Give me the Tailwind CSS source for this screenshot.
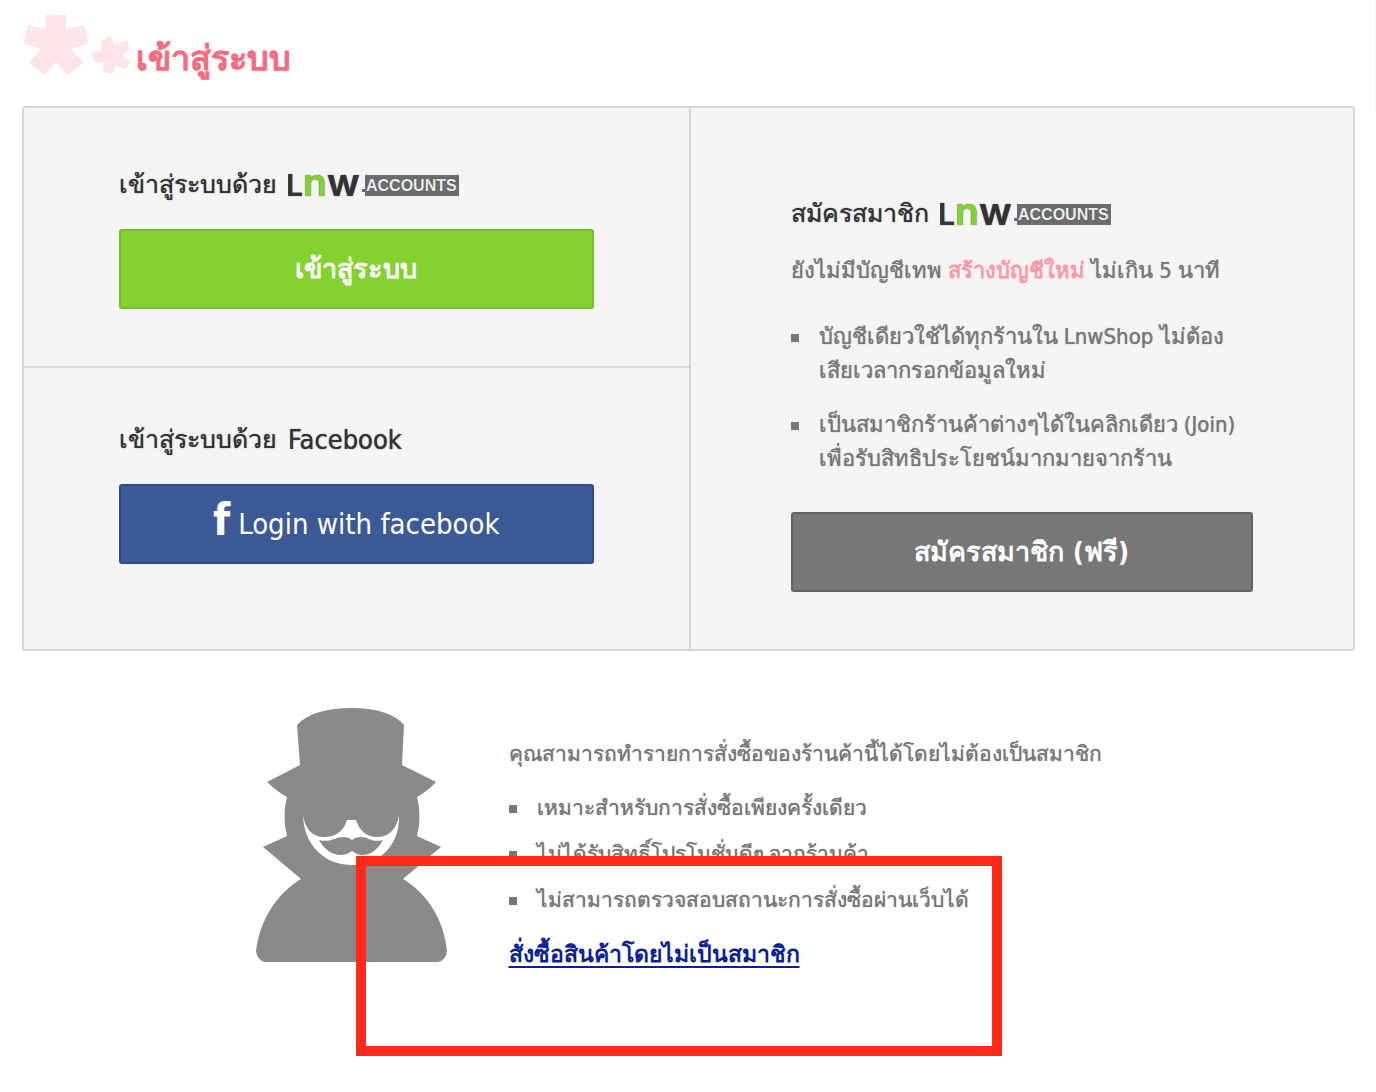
<!DOCTYPE html>
<html lang="th">
  <head>
    <meta charset="UTF-8" />
    <meta name="viewport" content="width=device-width, initial-scale=1.0" />
    <title>เข้าสู่ระบบ</title>
    <script src="https://cdn.jsdelivr.net/npm/@tailwindcss/browser@4"></script>
  </head>
  <body
    class="bg-white text-[#777] text-[21px] leading-[34px] [text-shadow:0_0_1px_currentColor] font-['DejaVu_Sans_Condensed','DejaVu_Sans',sans-serif]"
  >
    <svg class="hidden">
      <symbol id="lnw" viewBox="0 0 172 24">
        <g font-family="Inter, sans-serif" font-weight="600">
          <text x="-2" y="23" font-size="30" fill="#333">L</text>
          <text x="15" y="23" font-size="39" fill="#84d12f">n</text>
          <text x="39" y="23" font-size="39" fill="#333">w</text>
        </g>
        <path d="M77 2h94v21H77v-4h-3v-3h3z" fill="#6b6d6c" />
        <text x="78" y="18" font-family="Liberation Sans, sans-serif" font-size="16" font-weight="700" fill="#eee">ACCOUNTS</text>
      </symbol>
    </svg>
    <main class="relative min-h-screen pr-[21px] pl-[22px] pt-3 pb-9">
      <header class="flex h-[94px] items-start">
        <svg class="w-[110px] h-[66px] shrink-0" viewBox="0 0 110 66" fill="#ffe4e7">
          <path d="M24 1h20v17l18-5 5 18-18 6 12 14-15 12-12-13-12 13-15-12 12-14-18-6 5-18 18 5z" />
          <path d="M27 2h15" stroke="#fff" stroke-width="2" />
          <path d="M8 16l12 4M4 30l12 3M60 16l-12 4M64 30l-12 3" stroke="#fff" stroke-width="1" stroke-dasharray="3 3" />
          <path d="M78 30l10-6 6 9 11-5 3 9-8 6 8 7-4 7-10-4-4 9-9-2 1-9-10-1-2-10 10-2z" />
        </svg>
        <h1 class="pt-[22px] pl-1 text-[34px] leading-[48px] font-bold text-[#f56b80]">เข้าสู่ระบบ</h1>
      </header>

      <div class="grid grid-cols-2 rounded-[3px] border-2 border-[#d5d6da] bg-[#f4f4f4]">
        <div class="flex flex-col">
          <section class="border-b-2 border-[#d5d6da] px-[95px] pt-[57px] pb-[57px]">
            <h2 class="mb-6 flex h-10 items-center gap-[11px] text-[25px] text-[#333]">
              <span class="whitespace-nowrap">เข้าสู่ระบบด้วย</span>
              <svg class="h-6 w-[172px]" role="img" aria-label="Lnw Accounts"><use href="#lnw" /></svg>
            </h2>
            <button
              class="block h-20 w-full rounded-[3px] border-2 border-[#76bd29] bg-[#84d12f] text-[27px] font-bold text-white"
            >
              เข้าสู่ระบบ
            </button>
          </section>
          <section class="px-[95px] pt-[52px] pb-[85px]">
            <h2 class="mb-6 flex h-10 items-center gap-[11px] text-[25px] text-[#333]">
              เข้าสู่ระบบด้วย <span class="text-[27px]">Facebook</span>
            </h2>
            <button
              class="flex h-20 w-full items-center justify-center gap-2 rounded-[3px] border-2 border-[#2f4b82] bg-[#3b5a96] text-[29px] text-white"
            >
              <span class="pb-2 text-[44px] font-bold">f</span>
              <span>Login with facebook</span>
            </button>
          </section>
        </div>

        <section class="border-l-2 border-[#d5d6da] px-[100px] pt-[86px]">
          <h2 class="flex h-10 items-center gap-[11px] text-[25px] text-[#333]">
            <span class="whitespace-nowrap">สมัครสมาชิก</span>
            <svg class="h-6 w-[172px]" role="img" aria-label="Lnw Accounts"><use href="#lnw" /></svg>
          </h2>
          <p class="mt-5 text-[22px] whitespace-nowrap">
            ยังไม่มีบัญชีเทพ <a href="#" class="font-bold text-[#ff98a5] [text-shadow:none]">สร้างบัญชีใหม่</a> ไม่เกิน 5 นาที
          </p>
          <ul class="mt-8 space-y-5 text-[22px] whitespace-nowrap">
            <li class="flex gap-5">
              <span class="mt-[14px] size-2 bg-[#777]"></span>
              <span>บัญชีเดียวใช้ได้ทุกร้านใน LnwShop ไม่ต้อง<br />เสียเวลากรอกข้อมูลใหม่</span>
            </li>
            <li class="flex gap-5">
              <span class="mt-[14px] size-2 bg-[#777]"></span>
              <span>เป็นสมาชิกร้านค้าต่างๆได้ในคลิกเดียว (Join)<br />เพื่อรับสิทธิประโยชน์มากมายจากร้าน</span>
            </li>
          </ul>
          <button
            class="mt-9 block h-20 w-full rounded-[3px] border-2 border-[#626262] bg-[#777] text-[27px] font-bold text-white"
          >
            สมัครสมาชิก (ฟรี)
          </button>
        </section>
      </div>

      <section class="mt-14 flex items-start justify-center gap-[60px] pr-5">
        <svg class="h-[256px] w-[193px] shrink-0" viewBox="0 0 193 256">
          <path
            fill="#8a8a8a"
            d="M41 18C52 6 72 1 95 1s43 5 53 17l-2 40 34 17q-8 9-19 15 5 19 0 39l24 11-38 32c26 16 41 42 44 72q-1 9-9 11H9q-8-2-9-11c4-30 19-56 45-72L7 140l24-11q-5-20 0-39-11-6-20-15l33-17z"
          />
          <path
            fill="#fff"
            d="M47 108c2 14 9 22 21 22 13 0 20-7 23-17h9c3 10 10 17 21 17 12 0 20-8 22-22 1 30-19 50-47 50s-48-20-49-50z"
          />
          <path
            fill="#8a8a8a"
            d="M63 133c12 3 16-3 24-3 4 0 7 1 9 3 2-2 5-3 9-3 8 0 10 6 22 3-8 15-21 19-31 11-10 8-25 4-33-11z"
          />
        </svg>
        <div class="pt-[30px] whitespace-nowrap">
          <p>คุณสามารถทำรายการสั่งซื้อของร้านค้านี้ได้โดยไม่ต้องเป็นสมาชิก</p>
          <ul class="mt-5 space-y-3">
            <li class="flex gap-5">
              <span class="mt-[14px] size-2 bg-[#777]"></span>
              <span>เหมาะสำหรับการสั่งซื้อเพียงครั้งเดียว</span>
            </li>
            <li class="flex gap-5">
              <span class="mt-[14px] size-2 bg-[#777]"></span>
              <span>ไม่ได้รับสิทธิ์โปรโมชั่นดีๆ จากร้านค้า</span>
            </li>
            <li class="flex gap-5">
              <span class="mt-[14px] size-2 bg-[#777]"></span>
              <span>ไม่สามารถตรวจสอบสถานะการสั่งซื้อผ่านเว็บได้</span>
            </li>
          </ul>
          <a href="#" class="mt-5 inline-block text-[23px] font-bold text-[#0a1f9c] underline underline-offset-4 decoration-2 [text-shadow:none]">สั่งซื้อสินค้าโดยไม่เป็นสมาชิก</a>
        </div>
      </section>

      <!-- highlight frame over the guest checkout -->
      <div class="pointer-events-none absolute top-[856px] left-[356px] h-[200px] w-[646px] border-[10px] border-[#ff2a1a]"></div>
      <div class="absolute top-0 right-0 h-28 w-px bg-[#f4f4f4]"></div>
    </main>
  </body>
</html>
